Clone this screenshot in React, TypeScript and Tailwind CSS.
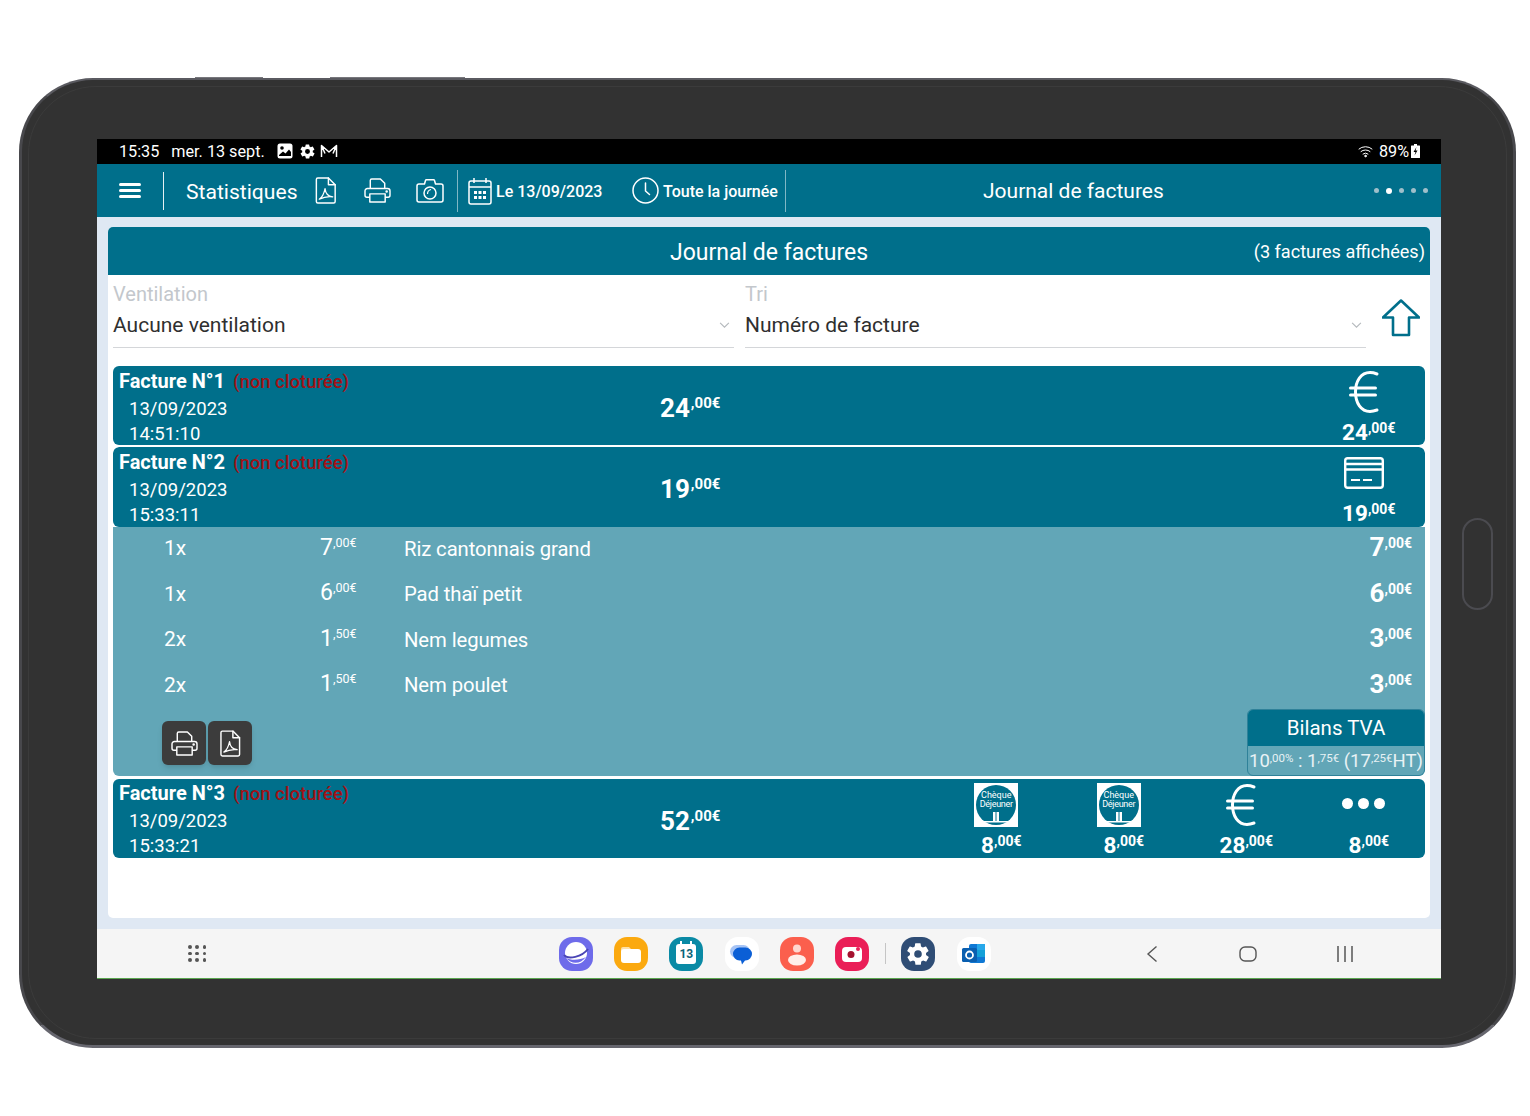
import React from "react";

const TEAL = "#006f8b";

function Price({ n, c, big = 26, small = 14, bold = true, gap = 0, left = 0 }: { n: string; c: string; big?: number; small?: number; bold?: boolean; gap?: number; left?: number }) {
  return (
    <span className={`inline-flex items-start leading-none text-white ${bold ? "font-bold" : "font-normal"}`}>
      <span style={{ fontSize: big }}>{n}</span>
      <span style={{ fontSize: small, marginTop: gap, marginLeft: left }}>,{c}€</span>
    </span>
  );
}

function PdfIcon({ className = "" }: { className?: string }) {
  return (
    <svg viewBox="0 0 22 28" fill="none" stroke="currentColor" strokeWidth="1.5" strokeLinejoin="round" strokeLinecap="round" className={className}>
      <path d="M2.5 1h11l7 7v17.5a1.5 1.5 0 0 1-1.5 1.5H2.5A1.5 1.5 0 0 1 1 25.5V2.5A1.5 1.5 0 0 1 2.5 1z" />
      <path d="M13.5 1v7h7" />
      <path d="M4 23c3-2 5-6 6-11 .5 5 3 8 8 8.5-4-.5-9 0-14 2.5z" strokeWidth="1.3" />
    </svg>
  );
}

function PrinterIcon({ className = "" }: { className?: string }) {
  return (
    <svg viewBox="0 0 28 26" fill="none" stroke="currentColor" strokeWidth="1.5" strokeLinejoin="round" className={className}>
      <path d="M6.5 11V2.5A1.5 1.5 0 0 1 8 1h9l4.5 4.5V11" />
      <path d="M6 20H3a2 2 0 0 1-2-2v-4.500A2.500 2.500 0 0 1 3.500 11h21a2.500 2.500 0 0 1 2.500 2.500V18a2 2 0 0 1-2 2h-3" />
      <path d="M6 16.5h16V25H6z" />
      <circle cx="23.5" cy="14" r=".6" fill="currentColor" />
    </svg>
  );
}

function CameraIcon() {
  return (
    <svg viewBox="0 0 28 24" fill="none" stroke="currentColor" strokeWidth="1.5" strokeLinejoin="round" className="w-[28px] h-[24px]">
      <path d="M3 5h5.500l1-3.500a1 1 0 0 1 1-.7h7a1 1 0 0 1 1 .7l1 3.500H25a2 2 0 0 1 2 2v14a2 2 0 0 1-2 2H3a2 2 0 0 1-2-2V7a2 2 0 0 1 2-2z" />
      <circle cx="14" cy="14" r="6" />
      <path d="M11.5 15c0-2.500 1.500-4 3.500-4.500" strokeWidth="1.2" />
    </svg>
  );
}

function CalendarIcon() {
  return (
    <svg viewBox="0 0 24 28" fill="none" stroke="currentColor" strokeWidth="1.5" className="w-[24px] h-[28px]">
      <rect x="1" y="4" width="22" height="23" rx="2" />
      <path d="M1 10h22M6 1v5M18 1v5" />
      <g fill="currentColor" stroke="none">
        <rect x="6" y="14" width="3" height="3" />
        <rect x="10.5" y="14" width="3" height="3" />
        <rect x="15" y="14" width="3" height="3" />
        <rect x="6" y="19" width="3" height="3" />
        <rect x="10.5" y="19" width="3" height="3" />
        <rect x="15" y="19" width="3" height="3" />
      </g>
    </svg>
  );
}

function ClockIcon() {
  return (
    <svg viewBox="0 0 27 27" fill="none" stroke="currentColor" strokeWidth="1.5" strokeLinecap="round" strokeLinejoin="round" className="w-[27px] h-[27px]">
      <circle cx="13.5" cy="13.5" r="12.5" />
      <path d="M13.5 6v8l4 3.500" />
    </svg>
  );
}

function EuroIcon() {
  return (
    <svg viewBox="0 0 30 42" fill="none" stroke="currentColor" strokeWidth="3" strokeLinecap="round" className="w-[30px] h-[42px]">
      <path d="M28 3C25 1.900 23 1.600 21 1.600 12 1.600 6.500 10 6.500 21S12 40.400 21 40.400c2 0 4-.3 7-1.400" />
      <path d="M1.500 17h25M1.500 24h25" />
    </svg>
  );
}

function CardIcon() {
  return (
    <svg viewBox="0 0 40 32" fill="none" stroke="currentColor" strokeWidth="2.4" className="w-[40px] h-[32px]">
      <rect x="1.200" y="1.200" width="37.600" height="29.600" rx="2.500" />
      <path d="M1 7h38M1 12.500h38" />
      <path d="M7 23h9M19 23h9" strokeWidth="2" />
    </svg>
  );
}

function ChequeLogo() {
  return (
    <div className="w-[44px] h-[44px] bg-white flex items-center justify-center">
      <div className="relative w-[40px] h-[40px] rounded-full flex flex-col items-center pt-[6px] text-white font-['Roboto'] text-[9px] leading-[8.5px]" style={{ backgroundColor: TEAL }}>
        <span>Chèque</span>
        <span className="tracking-[-0.3px]">Déjeuner</span>
        <svg viewBox="0 0 26 12" className="absolute left-[7px] bottom-[1px] w-[26px] h-[12px]" fill="white">
          <rect x="10" y="0" width="2.5" height="9" />
          <rect x="13.5" y="0" width="2.5" height="9" />
          <rect x="0" y="9" width="26" height="1.500" />
        </svg>
      </div>
    </div>
  );
}

function Pay({ children, n }: { children: React.ReactNode; n: string }) {
  return (
    <div className="w-[122.5px] flex flex-col items-center pt-[3px]">
      <div className="h-[46px] flex items-center justify-center">{children}</div>
      <div className="mt-[6px] h-[24px] flex items-start pl-[10px]"><Price n={n} c="00" big={22.5} small={14} gap={0} /></div>
    </div>
  );
}

function InvoiceRow({ no, time, total, children, h = "h-[79px]", top = "pt-[3px]" }: { no: string; time: string; total: string; children: React.ReactNode; h?: string; top?: string }) {
  return (
    <div className={`${h} flex text-white rounded-[6px] overflow-hidden`} style={{ backgroundColor: TEAL }}>
      <div className={`w-[547px] shrink-0 pl-[6px] ${top}`}>
        <div className="h-[25px] leading-[25px] text-[20px] font-bold whitespace-nowrap">
          {no} <span className="ml-[3px] text-[18.5px] font-medium text-[#a01216]">(non cloturée)</span>
        </div>
        <div className="pl-[10px] text-[18.5px] leading-[25.2px] mt-[3px]">
          <div>13/09/2023</div>
          <div>{time}</div>
        </div>
      </div>
      <div className="w-[120px] shrink-0 pt-[29px]"><Price n={total} c="00" big={26} small={15} gap={1} left={1} /></div>
      {children}
    </div>
  );
}

function Line({ q, u, name, uc = "00", tot }: { q: string; u: string; uc?: string; name: string; tot: string }) {
  return (
    <div className="h-[45.5px] flex items-center text-white">
      <div className="w-[51px] shrink-0" />
      <div className="w-[156px] shrink-0 text-[21px]">{q}</div>
      <div className="w-[84px] shrink-0"><Price n={u} c={uc} big={23} small={12.5} bold={false} gap={1} /></div>
      <div className="flex-1 text-[20.3px] tracking-[-0.1px]">{name}</div>
      <div className="pr-[13px]"><Price n={tot} c="00" big={26} small={14} gap={2} /></div>
    </div>
  );
}

function Select({ label, value, className }: { label: string; value: string; className: string }) {
  return (
    <div className={className}>
      <div className="text-[20px] leading-[24px] text-[#c3c7cc] pt-[7px] h-[31px]">{label}</div>
      <div className="h-[42px] border-b border-[#d4d6d9] flex items-center justify-between pr-[4px] pb-[2px] text-[21px] text-[#2f2f2f]">
        <span>{value}</span>
        <svg viewBox="0 0 12 8" className="w-[11px] h-[7px]" fill="none" stroke="#b5b9bd" strokeWidth="1.3"><path d="M1 1l5 5 5-5" /></svg>
      </div>
    </div>
  );
}

function DockIcon({ children, bg }: { children: React.ReactNode; bg: string }) {
  return (
    <div className="relative w-[34px] h-[34px] rounded-[13px] flex items-center justify-center overflow-hidden" style={{ backgroundColor: bg }}>
      {children}
    </div>
  );
}

const GEAR = "M19.4 13a7.5 7.5 0 0 0 0-2l2.1-1.600a.5.5 0 0 0 .1-.7l-2-3.400a.5.5 0 0 0-.6-.2l-2.500 1a7.500 7.500 0 0 0-1.700-1l-.4-2.700a.5.5 0 0 0-.5-.4h-4a.5.5 0 0 0-.5.4l-.4 2.700a7.500 7.500 0 0 0-1.700 1l-2.500-1a.5.5 0 0 0-.6.2l-2 3.400a.5.5 0 0 0 .1.7L4.600 11a7.500 7.500 0 0 0 0 2l-2.100 1.600a.5.5 0 0 0-.1.7l2 3.400c.1.2.4.3.6.2l2.500-1a7.500 7.500 0 0 0 1.700 1l.4 2.700c0 .2.3.4.5.4h4c.2 0 .5-.2.5-.4l.4-2.700a7.500 7.500 0 0 0 1.700-1l2.500 1c.2.1.5 0 .6-.2l2-3.400a.5.5 0 0 0-.1-.7zM12 15.500a3.500 3.500 0 1 1 0-7 3.500 3.500 0 0 1 0 7z";

export default function App() {
  return (
    <div className="w-[1530px] h-[1116px] bg-white pt-[78px] pl-[19px] font-['Roboto',sans-serif]">
      <div className="relative w-[1497px] h-[970px] rounded-[74px] bg-[#323232] border-x-[3px] border-t-[2px] border-b-[3px] border-x-[#48484c] border-t-[#5a5a60] border-b-[#66666e] pl-[75px] pt-[59px]">
        <div className="absolute left-[173px] top-[-3px] w-[68px] h-[1px] bg-[#77777c]" />
        <div className="absolute left-[308px] top-[-3px] w-[135px] h-[1px] bg-[#77777c]" />
        <div className="absolute left-[1440px] top-[438px] w-[31px] h-[92px] rounded-full border-2 border-[#4b4b50]" />
        <div className="absolute inset-[6px] rounded-[68px] border border-[#3b3b3b] pointer-events-none" />
        <div className="relative w-[1344px] h-[840px] flex flex-col">
          {/* status bar */}
          <div className="h-[25px] bg-black text-white flex items-center justify-between pl-[22px] pr-[21px] text-[16.2px] leading-none shrink-0">
            <div className="flex items-center">
              <span className="pt-[2px]">15:35</span>
              <span className="ml-[12px] pt-[2px]">mer. 13 sept.</span>
              <svg viewBox="0 0 16 16" className="ml-[12px] w-[16px] h-[16px]">
                <rect x="0.5" y="0.5" width="15" height="15" rx="2.5" fill="white" />
                <circle cx="5" cy="5" r="1.8" fill="black" />
                <path d="M2 12l4-3.500 2.500 2L12 6.500l2 2.500v4H2z" fill="black" />
              </svg>
              <svg viewBox="0 0 24 24" className="ml-[6px] w-[17px] h-[17px]" fill="white"><path d={GEAR} /></svg>
              <svg viewBox="0 0 18 14" className="ml-[4px] w-[18px] h-[14px]" fill="none" stroke="white" strokeWidth="1.5" strokeLinejoin="round">
                <path d="M1.5 13V1.500L9 8l7.500-6.500V13M1.500 1.500l3.500 8M16.500 1.500l-3.500 8" />
              </svg>
            </div>
            <div className="flex items-center">
              <svg viewBox="0 0 16 14" className="w-[16px] h-[14px]" fill="none" stroke="white" strokeWidth="1" strokeLinecap="round">
                <path d="M1 5a10 10 0 0 1 13 0M3 7.500a7 7 0 0 1 9 0M5 10a4 4 0 0 1 5 0" />
                <circle cx="7.5" cy="12" r=".8" fill="white" />
              </svg>
              <span className="ml-[5px] pt-[1px]">89%</span>
              <svg viewBox="0 0 9 14" className="ml-[2px] w-[9px] h-[14px]">
                <path d="M3 0h3v1.500h2.500a.5.5 0 0 1 .5.5v11.500a.5.5 0 0 1-.5.5H.5a.5.5 0 0 1-.5-.5V2a.5.5 0 0 1 .5-.5H3z" fill="white" />
                <path d="M5.5 3L2.500 8h2l-1 3.500L6.500 6.500h-2z" fill="black" />
              </svg>
            </div>
          </div>

          {/* toolbar */}
          <div className="h-[53px] flex items-center text-white shrink-0" style={{ backgroundColor: TEAL }}>
            <div className="w-[67px] h-[38px] shrink-0 border-r border-white/90 flex items-center pl-[22px] mr-[22px]">
              <div className="w-[22px] flex flex-col gap-[3.5px]">
                <div className="h-[2.5px] bg-white rounded-full" />
                <div className="h-[2.5px] bg-white rounded-full" />
                <div className="h-[2.5px] bg-white rounded-full" />
              </div>
            </div>
            <span className="text-[21.1px] w-[129px] shrink-0 pt-[3px]">Statistiques</span>
            <PdfIcon className="w-[22px] h-[27px] shrink-0" />
            <div className="w-[27px] shrink-0" />
            <PrinterIcon className="w-[27px] h-[25px] shrink-0" />
            <div className="w-[25px] shrink-0" />
            <CameraIcon />
            <div className="ml-[13px] h-[42px] w-px bg-white/50 shrink-0" />
            <div className="ml-[10px]"><CalendarIcon /></div>
            <span className="ml-[4px] text-[16px] font-medium w-[136px] shrink-0 whitespace-nowrap pt-[2px]">Le 13/09/2023</span>
            <ClockIcon />
            <span className="ml-[4px] text-[16px] font-medium w-[122px] shrink-0 whitespace-nowrap pt-[2px]">Toute la journée</span>
            <div className="h-[42px] w-px bg-white/50 shrink-0" />
            <div className="flex-1 pl-[197px] text-[21px] whitespace-nowrap pt-[3px]">Journal de factures</div>
            <div className="flex gap-[7px] pr-[13px] items-center">
              <div className="w-[5px] h-[5px] rounded-full bg-[#9fbfca]" />
              <div className="w-[6px] h-[6px] rounded-full bg-white" />
              <div className="w-[5px] h-[5px] rounded-full bg-[#9fbfca]" />
              <div className="w-[5px] h-[5px] rounded-full bg-[#9fbfca]" />
              <div className="w-[5px] h-[5px] rounded-full bg-[#9fbfca]" />
            </div>
          </div>

          {/* content */}
          <div className="flex-1 bg-[#dfe8f3] px-[11px] pt-[10px] pb-[11px] min-h-0">
            <div className="h-full bg-white rounded-[5px] overflow-hidden">
              <div className="relative h-[48px] flex items-center justify-center text-white pt-[4px]" style={{ backgroundColor: TEAL }}>
                <div className="text-[23px]">Journal de factures</div>
                <div className="absolute right-[5px] top-[11px] text-[18.1px] whitespace-nowrap">(3 factures affichées)</div>
              </div>
              <div className="h-[91px] flex pl-[5px]">
                <Select label="Ventilation" value="Aucune ventilation" className="w-[621px]" />
                <Select label="Tri" value="Numéro de facture" className="w-[621px] ml-[11px]" />
                <div className="ml-[16px] pt-[24px]">
                  <svg viewBox="0 0 38 38" className="w-[38px] h-[38px]" fill="none" stroke={TEAL} strokeWidth="2.6" strokeLinejoin="round">
                    <path d="M19 1.500L37 18.500H27V36H11V18.500H1z" />
                  </svg>
                </div>
              </div>
              <div className="px-[5px] flex flex-col">
                <InvoiceRow no="Facture N°1" time="14:51:10" total="24">
                  <div className="flex-1 flex justify-end">
                    <Pay n="24"><EuroIcon /></Pay>
                  </div>
                </InvoiceRow>
                <div className="mt-[2px] rounded-[6px] overflow-hidden">
                  <InvoiceRow no="Facture N°2" time="15:33:11" total="19" h="h-[80px]">
                    <div className="flex-1 flex justify-end">
                      <Pay n="19"><CardIcon /></Pay>
                    </div>
                  </InvoiceRow>
                  <div className="h-[249px] bg-[#62a6b7] flex flex-col">
                    <div className="mt-[-1px]">
                      <Line q="1x" u="7" name="Riz cantonnais grand" tot="7" />
                      <Line q="1x" u="6" name="Pad thaï petit" tot="6" />
                      <Line q="2x" u="1" uc="50" name="Nem legumes" tot="3" />
                      <Line q="2x" u="1" uc="50" name="Nem poulet" tot="3" />
                    </div>
                    <div className="flex justify-between items-start">
                      <div className="flex gap-[2px] ml-[49px] mt-[13px]">
                        <div className="w-[44px] h-[44px] rounded-[6px] bg-[#3c3c3c] shadow-md flex items-center justify-center text-white"><PrinterIcon className="w-[27px] h-[25px]" /></div>
                        <div className="w-[44px] h-[44px] rounded-[6px] bg-[#3c3c3c] shadow-md flex items-center justify-center text-white"><PdfIcon className="w-[21px] h-[27px]" /></div>
                      </div>
                      <div className="mt-[1px] w-[178px] h-[67px] rounded-[6px] border border-[#2f8199] overflow-hidden">
                        <div className="h-[36px] flex items-center justify-center text-white text-[20.5px] pt-[1px]" style={{ backgroundColor: TEAL }}>Bilans TVA</div>
                        <div className="h-[29px] pt-[2px] flex items-center justify-center text-[#e8f2f5] text-[18.5px] whitespace-nowrap">
                          10<span className="text-[11.5px] self-start mt-[2px]">,00%</span>&nbsp;: 1<span className="text-[11.5px] self-start mt-[2px]">,75€</span>&nbsp;(17<span className="text-[11.5px] self-start mt-[2px]">,25€</span>HT)
                        </div>
                      </div>
                    </div>
                  </div>
                </div>
                <div className="mt-[3px]">
                  <InvoiceRow no="Facture N°3" time="15:33:21" total="52" top="pt-[2px]">
                    <div className="flex-1 flex justify-end">
                      <Pay n="8"><ChequeLogo /></Pay>
                      <Pay n="8"><ChequeLogo /></Pay>
                      <Pay n="28"><EuroIcon /></Pay>
                      <Pay n="8">
                        <div className="flex gap-[5px] mb-[4px]">
                          <div className="w-[11px] h-[11px] rounded-full bg-white" />
                          <div className="w-[11px] h-[11px] rounded-full bg-white" />
                          <div className="w-[11px] h-[11px] rounded-full bg-white" />
                        </div>
                      </Pay>
                    </div>
                  </InvoiceRow>
                </div>
              </div>
            </div>
          </div>

          {/* nav bar */}
          <div className="h-[50px] shrink-0 bg-[#f5f5f5] border-b border-[#5aa64f] flex items-center">
            <div className="w-[462px] pl-[91px] shrink-0">
              <div className="grid grid-cols-3 gap-x-[4px] gap-y-[3px] w-[18px]">
                {[0, 1, 2, 3, 4, 5, 6, 7, 8].map((i) => (
                  <div key={i} className="w-[3.5px] h-[3.5px] rounded-full bg-[#555]" />
                ))}
              </div>
            </div>
            <div className="flex items-center gap-[21.2px]">
              <DockIcon bg="#6e6bea">
                <svg viewBox="0 0 34 34" className="w-[34px] h-[34px]">
                  <circle cx="17" cy="16" r="11" fill="white" />
                  <path d="M7 21c5 6 14 7 20-1-6 3-14 4-20 1z" fill="#6e6bea" />
                  <path d="M5 18c4 5 18 2 24-6" stroke="#4a45b5" strokeWidth="2" fill="none" />
                </svg>
              </DockIcon>
              <DockIcon bg="#fba90f">
                <svg viewBox="0 0 34 34" className="w-[34px] h-[34px]">
                  <path d="M7 12a2 2 0 0 1 2-2h6l2 2v4H7z" fill="#fde0a8" />
                  <rect x="7" y="12" width="20" height="14" rx="3" fill="#fff" />
                </svg>
              </DockIcon>
              <DockIcon bg="#0a8aa5">
                <svg viewBox="0 0 34 34" className="w-[34px] h-[34px]">
                  <rect x="7" y="7" width="20" height="20" rx="3" fill="white" />
                  <path d="M12 4v6M22 4v6" stroke="white" strokeWidth="2" />
                </svg>
                <span className="absolute text-[12px] font-bold text-[#0b6378]">13</span>
              </DockIcon>
              <DockIcon bg="#ffffff">
                <svg viewBox="0 0 34 34" className="w-[34px] h-[34px]">
                  <rect x="5" y="8" width="20" height="13" rx="6.5" fill="#a7c4f5" />
                  <path d="M8 17a6.500 6.500 0 0 1 6.500-6.500h6a6.500 6.500 0 0 1 0 13H20l-3 4-1-4h-1.500A6.500 6.500 0 0 1 8 17z" fill="#0b5fd6" />
                </svg>
              </DockIcon>
              <DockIcon bg="#fb5f4d">
                <svg viewBox="0 0 34 34" className="w-[34px] h-[34px]">
                  <circle cx="17" cy="11.5" r="4" fill="#ffd6cf" />
                  <ellipse cx="17" cy="23" rx="9" ry="5.5" fill="#ffeee9" />
                </svg>
              </DockIcon>
              <DockIcon bg="#ea1e57">
                <svg viewBox="0 0 34 34" className="w-[34px] h-[34px]">
                  <rect x="7" y="10" width="20" height="15" rx="4" fill="white" />
                  <circle cx="16" cy="17.5" r="3.5" fill="#a5112f" />
                  <circle cx="23" cy="12" r="2" fill="#ea1e57" />
                </svg>
              </DockIcon>
              <div className="w-px h-[21px] bg-[#c5c5c5] ml-[-5.5px] mr-[-5.5px]" />
              <DockIcon bg="#2f4d75">
                <svg viewBox="0 0 24 24" className="w-[26px] h-[26px]" fill="white"><path d={GEAR} /></svg>
              </DockIcon>
              <DockIcon bg="#ffffff">
                <svg viewBox="0 0 34 34" className="w-[34px] h-[34px]">
                  <rect x="12" y="7" width="16" height="19" rx="2" fill="#0f78d4" />
                  <rect x="20" y="7" width="8" height="6" fill="#28a8ea" />
                  <rect x="20" y="13" width="8" height="7" fill="#14a0d8" />
                  <rect x="5" y="11" width="15" height="14" rx="1.5" fill="#0a5fb0" />
                  <circle cx="12.5" cy="18" r="3.5" fill="none" stroke="white" strokeWidth="1.8" />
                </svg>
              </DockIcon>
            </div>
            <div className="ml-[155px] flex items-center">
              <svg viewBox="0 0 12 18" className="w-[12px] h-[18px]" fill="none" stroke="#555" strokeWidth="1.4"><path d="M10.500 1.500L2 9l8.500 7.500" /></svg>
              <svg viewBox="0 0 18 16" className="ml-[81px] w-[18px] h-[16px]" fill="none" stroke="#555" strokeWidth="1.4"><rect x="1" y="1" width="16" height="14" rx="5" /></svg>
              <svg viewBox="0 0 18 16" className="ml-[79px] w-[18px] h-[16px]" fill="none" stroke="#555" strokeWidth="1.5"><path d="M2 0v16M9 0v16M16 0v16" /></svg>
            </div>
          </div>
        </div>
      </div>
    </div>
  );
}
